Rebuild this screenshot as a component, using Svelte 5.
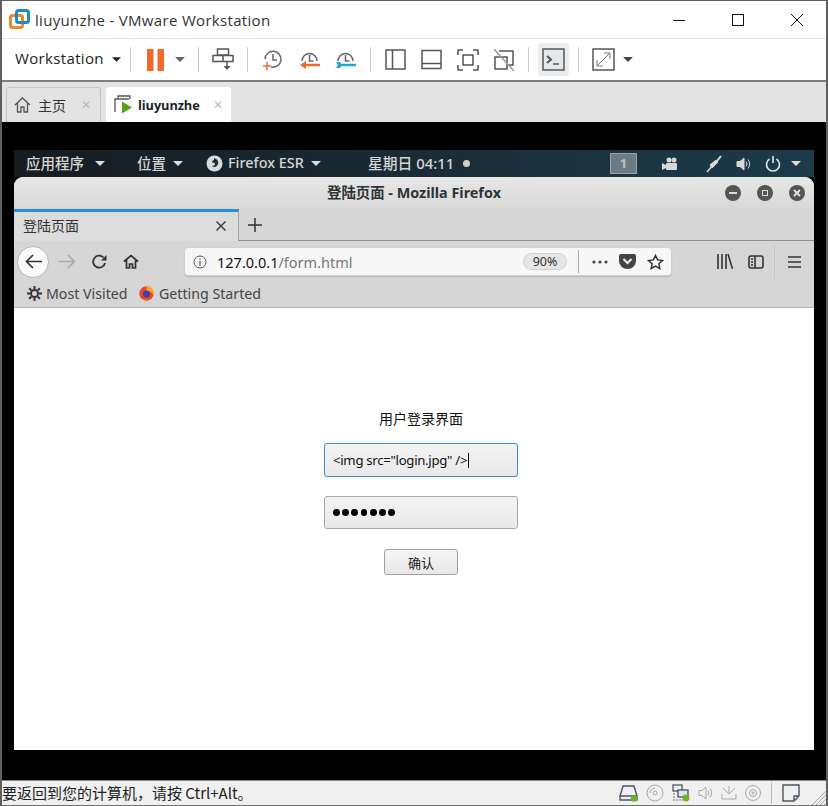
<script>
    const browserTitle = '登陆页面 - Mozilla Firefox';
</script>

{#snippet caret(w = 10, color = '#333')}
    <svg class="caret" width={w} height="5" viewBox="0 0 10 5"><path d="M0 0h10L5 5z" fill={color} /></svg>
{/snippet}

<div class="window">
    <header class="titlebar">
        <svg class="logo" width="22" height="22" viewBox="0 0 22 22">
            <rect x="1.5" y="6.500" width="12" height="12" rx="2" fill="none" stroke="#f08a24" stroke-width="3" />
            <rect x="7.500" y="1.500" width="12" height="12" rx="2" fill="none" stroke="#1b8fc4" stroke-width="3" />
        </svg>
        <span class="title">liuyunzhe - VMware Workstation</span>
        <div class="winbtns">
            <svg width="14" height="14" viewBox="0 0 14 14"><path d="M1 7.500h12" stroke="#111" /></svg>
            <svg width="14" height="14" viewBox="0 0 14 14"><rect x="1.500" y="1.500" width="11" height="11" fill="none" stroke="#111" /></svg>
            <svg width="14" height="14" viewBox="0 0 14 14"><path d="M1 1l12 12M13 1L1 13" stroke="#111" /></svg>
        </div>
    </header>

    <nav class="toolbar">
        <span class="menu">Workstation</span>
        <span class="c1">{@render caret(9, '#222')}</span>
        <i class="sep s1"></i>
        <svg class="pause" width="17" height="22" viewBox="0 0 17 22"><path d="M0 0h6.500v22H0zM10.500 0H17v22h-6.500z" fill="#f0692b" /></svg>
        <span class="c2">{@render caret(10, '#666')}</span>
        <i class="sep s2"></i>
        <svg class="snapsend" width="22" height="24" viewBox="0 0 22 24" fill="none" stroke="#555" stroke-width="1.500">
            <path d="M5.500 1h11v6h-11zM1 7.500h20v6H1zM11 7v6" />
            <path d="M15 14v4" /><path d="M11.500 18h7L15 22z" fill="#555" stroke="none" />
        </svg>
        <i class="sep s3"></i>
        <svg class="clock1" width="21" height="22" viewBox="0 0 21 22" fill="none" stroke="#666" stroke-width="1.500">
            <path d="M3 10a8 8 0 1 1 6 8" /><path d="M11 5v6h4" />
            <path d="M5 13v8M1 17h8" stroke="#e8703a" />
        </svg>
        <svg class="clock2" width="21" height="22" viewBox="0 0 21 22" fill="none" stroke="#666" stroke-width="1.500">
            <path d="M3 12a7.500 7.500 0 0 1 15 0" /><path d="M10.500 6v6h4" />
            <path d="M6 16h15" stroke="#ec6a2c" stroke-width="2.500" /><path d="M7 12v8l-6-4z" fill="#ec6a2c" stroke="none" />
        </svg>
        <svg class="clock3" width="21" height="22" viewBox="0 0 21 22" fill="none" stroke="#666" stroke-width="1.500">
            <path d="M3 12a7.500 7.500 0 0 1 15 0" /><path d="M10.500 6v6h4" />
            <path d="M6 16h15" stroke="#22a6cc" stroke-width="2.500" /><path d="M1 13h4l2 3-2 3H1l2-3z" fill="#22a6cc" stroke="none" />
        </svg>
        <i class="sep s4"></i>
        <svg class="v1" width="21" height="21" viewBox="0 0 21 21" fill="none" stroke="#555" stroke-width="1.500"><rect x="1" y="1" width="19" height="19" /><path d="M7.500 1v19" /></svg>
        <svg class="v2" width="21" height="21" viewBox="0 0 21 21" fill="none" stroke="#555" stroke-width="1.500"><rect x="1" y="1.500" width="19" height="18" /><path d="M1 14.500h19" /></svg>
        <svg class="v3" width="22" height="22" viewBox="0 0 22 22" fill="none" stroke="#555" stroke-width="1.500"><path d="M1 6V1h5M16 1h5v5M21 16v5h-5M6 21H1v-5" /><rect x="6" y="6" width="10" height="10" /></svg>
        <svg class="v4" width="23" height="22" viewBox="0 0 23 22" fill="none" stroke="#555" stroke-width="1.500"><path d="M7 2h14v14h-4M3 8h12v12H3z" /><path d="M2 0l20 22" stroke="#999" /></svg>
        <i class="sep s5"></i>
        <div class="termwrap">
            <svg width="23" height="23" viewBox="0 0 23 23" fill="#e2e8ec" stroke="#555" stroke-width="1.500"><rect x="1" y="1" width="21" height="21" /><path d="M5 8l4 3.500L5 15" fill="none" stroke-width="2" /><path d="M11 16h6" fill="none" /></svg>
        </div>
        <i class="sep s6"></i>
        <svg class="full" width="23" height="23" viewBox="0 0 23 23" fill="none" stroke="#555" stroke-width="1.500"><rect x="1" y="1" width="21" height="21" /><path d="M6 17L17 6M12 5h6v6M5 12v6h6" stroke-width="1" stroke="#777" /></svg>
        <span class="c3">{@render caret(10, '#444')}</span>
    </nav>

    <div class="vmtabs">
        <div class="vmtab home">
            <svg width="17" height="16" viewBox="0 0 17 16" fill="none" stroke="#555" stroke-width="1.300"><path d="M1 8l7.500-7L16 8M3.500 6v9h3.500v-5h3v5h3.500V6" /></svg>
            <span class="zh">主页</span>
            <span class="x">✕</span>
        </div>
        <div class="vmtab vm">
            <svg width="20" height="19" viewBox="0 0 20 19" fill="none" stroke="#555" stroke-width="1.300"><path d="M4 3V1h12v3M1 17V4h14" /><path d="M8 6.500v12l10-6z" fill="#5a9e1f" stroke="none" /></svg>
            <b>liuyunzhe</b>
            <span class="x">✕</span>
        </div>
    </div>

    <main class="vmarea">
        <div class="guest">
            <div class="gnome">
                <span class="g apps">应用程序</span>
                <span class="gc c-a">{@render caret(10, '#ddd')}</span>
                <span class="g places">位置</span>
                <span class="gc c-b">{@render caret(10, '#ddd')}</span>
                <svg class="fficon" width="17" height="17" viewBox="0 0 17 17"><circle cx="8.500" cy="8.500" r="8" fill="#d8dadb" /><path d="M8 3c3 1 5 3 4 6s-4 4-6 2c2 0 3-1 3-2S7 7 6 8c0-2 1-3 2-3z" fill="#1c2c35" /></svg>
                <span class="g ffname">Firefox ESR</span>
                <span class="gc c-c">{@render caret(10, '#ddd')}</span>
                <span class="g clock">星期日 04:11</span>
                <i class="dot"></i>
                <span class="ws">1</span>
                <svg class="cam" width="16" height="14" viewBox="0 0 16 14" fill="#d8d8d8"><circle cx="7" cy="3" r="2.500" /><circle cx="12" cy="3" r="2.500" /><rect x="4" y="6" width="11" height="7" rx="1" /><path d="M0 6l4 2v3l-4 2z" /></svg>
                <svg class="jack" width="16" height="18" viewBox="0 0 16 18" fill="none" stroke="#d8d8d8"><path d="M1 17l6-7" stroke-width="1.500" /><path d="M6 13l-2-3 6-5 2 2z" fill="#d8d8d8" /><path d="M11 6l4-5" stroke-width="2" /></svg>
                <svg class="vol" width="16" height="14" viewBox="0 0 16 14" fill="none" stroke="#d8d8d8"><path d="M1 4.500h3L8 1v12L4 9.500H1z" fill="#d8d8d8" /><path d="M10 4.500a4 4 0 0 1 0 5M12 2.500a7 7 0 0 1 0 9" /></svg>
                <svg class="power" width="16" height="17" viewBox="0 0 16 17" fill="none" stroke="#e2e2e2" stroke-width="1.600"><path d="M4.500 4a6.500 6.500 0 1 0 7 0M8 1v7" /></svg>
                <span class="gc c-d">{@render caret(10, '#ddd')}</span>
            </div>

            <div class="firefox">
                <div class="ff-title">
                    <strong>{browserTitle}</strong>
                    <div class="ff-btns">
                        <span class="fb"><i class="b-min"></i></span>
                        <span class="fb"><i class="b-max"></i></span>
                        <span class="fb"><svg width="8" height="8" viewBox="0 0 8 8"><path d="M1 1l6 6M7 1L1 7" stroke="#e4e4e4" stroke-width="1.800" /></svg></span>
                    </div>
                </div>

                <div class="ff-tabs">
                    <div class="ff-tab">
                        <span>登陆页面</span>
                        <svg width="10" height="10" viewBox="0 0 10 10"><path d="M.5.500l9 9M9.500.500l-9 9" stroke="#333" stroke-width="1.400" /></svg>
                    </div>
                    <svg class="plus" width="14" height="14" viewBox="0 0 14 14"><path d="M7 0v14M0 7h14" stroke="#333" stroke-width="1.500" /></svg>
                </div>

                <div class="ff-nav">
                    <span class="back"><svg width="17" height="15" viewBox="0 0 17 15" fill="none" stroke="#333" stroke-width="1.700"><path d="M8 1L1.500 7.500 8 14M2 7.500h15" /></svg></span>
                    <svg class="fwd" width="17" height="15" viewBox="0 0 17 15" fill="none" stroke="#aaa" stroke-width="1.700"><path d="M9 1l6.500 6.500L9 14M15 7.500H0" /></svg>
                    <svg class="reload" width="15" height="15" viewBox="0 0 15 15" fill="none" stroke="#333" stroke-width="1.800"><path d="M13 9a6 6 0 1 1-1.500-5.500" /><path d="M14.500 1v5.500H9z" fill="#333" stroke="none" /></svg>
                    <svg class="homeicon" width="16" height="15" viewBox="0 0 16 15" fill="none" stroke="#333" stroke-width="1.700"><path d="M1 7.500L8 1.500l7 6M3.500 6v8h3v-4h3v4h3V6" /></svg>
                    <div class="urlbar">
                        <svg width="14" height="14" viewBox="0 0 14 14" fill="none" stroke="#555"><circle cx="7" cy="7" r="6" /><path d="M7 6v4.500M7 3.500v1.200" stroke-width="1.300" /></svg>
                        <span class="url">127.0.0.1<em>/form.html</em></span>
                        <span class="zoom">90%</span>
                        <i class="urlsep"></i>
                        <svg class="dots" width="16" height="4" viewBox="0 0 16 4" fill="#444"><circle cx="2" cy="2" r="1.600" /><circle cx="8" cy="2" r="1.600" /><circle cx="14" cy="2" r="1.600" /></svg>
                        <svg class="pocket" width="17" height="15" viewBox="0 0 17 15"><path d="M2 0h13a2 2 0 0 1 2 2v5a8.500 8 0 0 1-17 0V2a2 2 0 0 1 2-2z" fill="#444" /><path d="M4.500 5l4 4 4-4" fill="none" stroke="#eee" stroke-width="2" /></svg>
                        <svg class="star" width="17" height="16" viewBox="0 0 17 16" fill="none" stroke="#333" stroke-width="1.500"><path d="M8.500 1.500l2.100 4.400 4.900.6-3.600 3.300.9 4.800-4.300-2.400-4.300 2.400.9-4.800-3.600-3.300 4.900-.6z" /></svg>
                    </div>
                    <svg class="lib" width="16" height="15" viewBox="0 0 16 15" stroke="#333" stroke-width="1.600"><path d="M1 0v15M5 0v15M9 0v15M11 0l4.500 15" /></svg>
                    <svg class="side" width="16" height="14" viewBox="0 0 16 14" fill="none" stroke="#333" stroke-width="1.600"><rect x="1" y="1" width="14" height="12" rx="2" /><path d="M7 1v12M3 4h2M3 7h2M3 10h2" /></svg>
                    <i class="navsep"></i>
                    <svg class="burger" width="13" height="12" viewBox="0 0 13 12" stroke="#333" stroke-width="1.700"><path d="M0 1h13M0 6h13M0 11h13" /></svg>
                </div>

                <div class="ff-marks">
                    <svg width="15" height="15" viewBox="0 0 15 15" fill="none" stroke="#333"><circle cx="7.500" cy="7.500" r="3.500" stroke-width="2" /><path d="M7.500 0v3M7.500 12v3M0 7.500h3M12 7.500h3M2.200 2.200l2 2M10.800 10.800l2 2M2.200 12.800l2-2M10.800 4.200l2-2" stroke-width="2" /></svg>
                    <span class="mark-a">Most Visited</span>
                    <svg class="ffcolor" width="15" height="15" viewBox="0 0 15 15"><circle cx="7.500" cy="7.500" r="7.200" fill="#e8452c" /><path d="M7.500 0a7.500 7.500 0 0 1 7 10c-1-3-3-5-7-5z" fill="#f7a823" /><circle cx="7.500" cy="8" r="3.500" fill="#3f3fa8" /><path d="M1 11a7.500 7.500 0 0 0 11 2c-4 1-8 0-11-2z" fill="#f2711c" /></svg>
                    <span>Getting Started</span>
                </div>

                <div class="page">
                    <div class="login">
                        <p>用户登录界面</p>
                        <div class="field active">&lt;img src="login.jpg" /&gt;<i class="cursor"></i></div>
                        <div class="field pwd">
                            {#each Array(7) as _}<i></i>{/each}
                        </div>
                        <button type="button">确认</button>
                    </div>
                </div>
            </div>
        </div>
    </main>

    <footer class="status">
        <span class="msg">要返回到您的计算机，请按 Ctrl+Alt。</span>
        <div class="tray">
            <svg width="19" height="17" viewBox="0 0 19 17" fill="none" stroke="#4a5560" stroke-width="1.400"><path d="M4 1h11l3 10v4H1v-4zM1 11h17" /><circle cx="15" cy="13.500" r="3.200" fill="#6cb52d" stroke="none" /></svg>
            <svg width="18" height="18" viewBox="0 0 18 18" fill="none" stroke="#aaa"><circle cx="9" cy="9" r="8" /><circle cx="9" cy="9" r="2" /><path d="M4 9a5 5 0 0 1 5-5" /></svg>
            <svg width="18" height="18" viewBox="0 0 18 18" fill="none" stroke="#4a5560" stroke-width="1.300"><rect x="1" y="1" width="9" height="6" /><rect x="6" y="6" width="10" height="7" fill="#dfe6ee" /><path d="M1 10h3M1 13h3M1 16h10" stroke="#999" stroke-dasharray="2 1" /><circle cx="14" cy="14" r="3.400" fill="#6cb52d" stroke="none" /></svg>
            <svg width="15" height="14" viewBox="0 0 15 14" fill="none" stroke="#aaa"><path d="M1 4.500h3L8 1v12L4 9.500H1zM10 4.500a4 4 0 0 1 0 5M12 2.500a7 7 0 0 1 0 9" /></svg>
            <svg width="16" height="16" viewBox="0 0 16 16" fill="none" stroke="#aaa"><path d="M1 9v5h14V9M8 1v8M5 6l3 3 3-3M2 3l3 3M14 3l-3 3" /></svg>
            <svg width="16" height="16" viewBox="0 0 16 16" fill="none" stroke="#aaa"><circle cx="8" cy="8" r="7.500" /><circle cx="8" cy="8" r="3.500" /><circle cx="8" cy="8" r="1" /></svg>
            <i class="traysep"></i>
            <svg width="18" height="18" viewBox="0 0 18 18" fill="none" stroke="#4a5560" stroke-width="1.400"><path d="M1 1h16v11l-5 5H1zM17 12h-5v5" /></svg>
            <svg class="grip" width="14" height="14" viewBox="0 0 14 14" stroke="#aaa"><path d="M0 14L14 0M4 14L14 4M8 14l6-6M12 14l2-2" /></svg>
        </div>
    </footer>
</div>

<style>
    :global(body) {
        margin: 0;
        background: #fff;
    }

    .window {
        width: 828px;
        height: 806px;
        box-sizing: border-box;
        border: 2px solid #5f5f5f;
        border-top-width: 1px;
        border-bottom-width: 0;
        display: flex;
        flex-direction: column;
        font-family: "Open Sans", "Noto Sans CJK SC", sans-serif;
        color: #222;
        overflow: hidden;
    }

    i {
        display: block;
    }

    /* vmware chrome */
    .titlebar {
        height: 37px;
        flex: none;
        display: flex;
        align-items: center;
        background: #fff;
        padding-left: 7px;
    }

    .title {
        margin-left: 4px;
        font-size: 15px;
        letter-spacing: 0.32px;
        color: #333;
    }

    .winbtns {
        margin-left: auto;
        display: flex;
        gap: 45px;
        margin-right: 22px;
    }

    .toolbar {
        height: 44px;
        flex: none;
        box-sizing: border-box;
        display: flex;
        align-items: center;
        background: #fff;
        border-top: 1px solid #e8e8e8;
        border-bottom: 2px solid #7d7d7d;
        padding-left: 13px;
    }

    .toolbar svg {
        flex: none;
    }

    .menu {
        font-size: 15px;
        width: 90px;
        letter-spacing: 0.35px;
        padding-bottom: 3px;
    }

    .caret {
        display: block;
    }

    .c1 { margin-left: 7px; }
    .sep {
        width: 1px;
        height: 25px;
        background: #ccc;
        flex: none;
    }
    .s1 { margin-left: 9px; }
    .pause { margin-left: 16px; }
    .c2 { margin-left: 11px; }
    .s2 { margin-left: 13px; }
    .snapsend { margin-left: 13px; }
    .s3 { margin-left: 13px; }
    .clock1 { margin-left: 14px; }
    .clock2 { margin-left: 16px; }
    .clock3 { margin-left: 15px; }
    .s4 { margin-left: 14px; }
    .v1 { margin-left: 14px; }
    .v2 { margin-left: 15px; }
    .v3 { margin-left: 15px; }
    .v4 { margin-left: 13px; }
    .s5 { margin-left: 13px; }

    .termwrap {
        margin-left: 9px;
        width: 31px;
        height: 33px;
        background: #e9edef;
        border-radius: 3px;
        display: flex;
        align-items: center;
        justify-content: center;
    }

    .s6 { margin-left: 9px; }
    .full { margin-left: 13px; }
    .c3 { margin-left: 8px; }

    .vmtabs {
        height: 40px;
        flex: none;
        box-sizing: border-box;
        background: #e3e3e3;
        display: flex;
        align-items: flex-end;
        gap: 5px;
        padding-left: 4px;
    }

    .vmtab {
        height: 35px;
        box-sizing: border-box;
        display: flex;
        align-items: center;
        border-radius: 3px 3px 0 0;
    }

    .vmtab.home {
        width: 95px;
        border: 1px solid #c4c4c4;
        border-bottom: 0;
        padding-left: 7px;
        font-size: 14px;
        color: #333;
    }

    .zh {
        margin-left: 7px;
    }

    .vmtab.vm {
        width: 125px;
        background: #fff;
        padding-left: 8px;
    }

    .vmtab b {
        font-size: 12.800px;
        margin-left: 4px;
        width: 67px;
        color: #222;
        letter-spacing: -0.1px;
    }

    .x {
        color: #bbb;
        font-size: 12px;
        font-family: "DejaVu Sans", sans-serif;
    }

    .home .x {
        margin-left: 15px;
    }

    .vm .x {
        margin-left: 8px;
    }

    /* guest */
    .vmarea {
        height: 658px;
        flex: none;
        box-sizing: border-box;
        background: #000;
        padding: 28px 12px 30px;
    }

    .guest {
        height: 600px;
        display: flex;
        flex-direction: column;
    }

    .gnome {
        height: 27px;
        flex: none;
        display: flex;
        align-items: center;
        background: linear-gradient(90deg, #161c20, #1a2d38 55%, #1c3b4b);
        color: #d6d6d6;
        padding-left: 12px;
        font-family: "Noto Sans", "Noto Sans CJK SC", sans-serif;
    }

    .gnome svg {
        flex: none;
    }

    .g {
        font-size: 14.500px;
        font-weight: 500;
        white-space: nowrap;
        padding-bottom: 2px;
    }

    .apps { width: 58px; }
    .c-a { margin-left: 11px; }
    .places { margin-left: 32px; width: 29px; }
    .c-b { margin-left: 7px; }
    .fficon { margin-left: 23px; }
    .ffname { margin-left: 5px; width: 78px; font-size: 14.400px; }
    .c-c { margin-left: 5px; }
    .clock { margin-left: 47px; width: 89px; font-size: 14.800px; }

    .dot {
        width: 7px;
        height: 7px;
        border-radius: 50%;
        background: #d0d0d0;
        margin-left: 6px;
    }

    .ws {
        margin-left: 140px;
        width: 27px;
        height: 21px;
        box-sizing: border-box;
        border: 1px solid #99a3aa;
        background: #6d7a83;
        color: #b9c0c5;
        font-size: 13px;
        font-weight: 700;
        text-align: center;
        line-height: 19px;
    }

    .cam { margin-left: 25px; }
    .jack { margin-left: 28px; }
    .vol { margin-left: 14px; }
    .power { margin-left: 13px; }
    .c-d { margin-left: 10px; }

    .firefox {
        flex: 1;
        min-height: 0;
        display: flex;
        flex-direction: column;
        border-radius: 9px 9px 0 0;
        overflow: hidden;
        font-family: "Noto Sans", "Noto Sans CJK SC", sans-serif;
        background: #d6d6d6;
        color: #333;
    }

    .ff-title {
        height: 32px;
        flex: none;
        box-sizing: border-box;
        padding-bottom: 3px;
        position: relative;
        display: flex;
        align-items: center;
        justify-content: center;
        background: linear-gradient(#e7e7e7, #d8d8d8);
    }

    .ff-title strong {
        font-size: 14.400px;
        font-weight: 700;
        color: #2e3436;
    }

    .ff-btns {
        position: absolute;
        right: 9px;
        top: 8px;
        display: flex;
        gap: 16px;
    }

    .fb {
        width: 16px;
        height: 16px;
        border-radius: 50%;
        background: #555;
        display: flex;
        align-items: center;
        justify-content: center;
    }

    .b-min {
        width: 8px;
        height: 2px;
        background: #ddd;
    }

    .b-max {
        width: 6px;
        height: 6px;
        border: 1.500px solid #ddd;
        box-sizing: border-box;
    }

    .ff-tabs {
        height: 32px;
        flex: none;
        box-sizing: border-box;
        display: flex;
        align-items: center;
        border-bottom: 1px solid #8d8d8d;
    }

    .ff-tab {
        width: 225px;
        height: 32px;
        box-sizing: border-box;
        border-top: 3px solid #2a90d6;
        border-right: 1px solid #a5a5a5;
        display: flex;
        align-items: center;
        padding: 0 12px 2px 9px;
        justify-content: space-between;
        font-size: 14px;
        background: #dcdcdc;
    }

    .ff-tab svg {
        margin-top: 2px;
    }

    .plus {
        margin-left: 9px;
    }

    .ff-nav {
        height: 41px;
        flex: none;
        display: flex;
        align-items: center;
        padding-left: 3px;
    }

    .ff-nav > svg {
        flex: none;
    }

    .back {
        width: 32px;
        height: 32px;
        box-sizing: border-box;
        border: 1px solid #b5b5b5;
        border-radius: 50%;
        background: #fbfbfb;
        display: flex;
        align-items: center;
        justify-content: center;
        flex: none;
    }

    .fwd { margin-left: 10px; }
    .reload { margin-left: 16px; }
    .homeicon { margin-left: 16px; }

    .urlbar {
        margin-left: 45px;
        width: 488px;
        height: 29px;
        box-sizing: border-box;
        background: #f7f7f7;
        border: 1px solid #d0d0d0;
        border-radius: 4px;
        box-shadow: 0 1px 1px rgba(0, 0, 0, 0.12);
        display: flex;
        align-items: center;
        padding-left: 8px;
    }

    .urlbar svg {
        flex: none;
    }

    .url {
        margin-left: 10px;
        width: 306px;
        font-size: 14.500px;
        color: #111;
    }

    .url em {
        font-style: normal;
        color: #777;
    }

    .zoom {
        width: 44px;
        height: 17px;
        box-sizing: border-box;
        background: #e6e6e6;
        border: 1px solid #d0d0d0;
        border-radius: 9px;
        font-size: 12.500px;
        line-height: 15px;
        text-align: center;
    }

    .urlsep {
        width: 1px;
        height: 23px;
        background: #aaa;
        margin-left: 11px;
    }

    .dots { margin-left: 13px; }
    .pocket { margin-left: 11px; }
    .star { margin-left: 11px; }
    .lib { margin-left: 45px; }
    .side { margin-left: 15px; }

    .navsep {
        width: 1px;
        height: 34px;
        background: #c4c4c4;
        margin-left: 10px;
    }

    .burger { margin-left: 13px; }

    .ff-marks {
        height: 26px;
        flex: none;
        box-sizing: border-box;
        border-bottom: 1px solid #b5b5b5;
        display: flex;
        align-items: center;
        padding: 0 0 3px 13px;
        font-size: 14.200px;
        color: #444;
    }

    .mark-a {
        margin-left: 4px;
        width: 81px;
        white-space: nowrap;
    }

    .ffcolor {
        margin-left: 12px;
        margin-right: 5px;
    }

    .page {
        flex: 1;
        background: #fff;
        font-family: "Noto Sans", "Noto Sans CJK SC", sans-serif;
    }

    .login {
        margin-left: 310px;
        width: 194px;
        padding-top: 101px;
        display: flex;
        flex-direction: column;
        align-items: center;
        color: #111;
    }

    .login p {
        margin: 0;
        height: 19px;
        line-height: 19px;
        font-size: 14px;
    }

    .field {
        width: 194px;
        box-sizing: border-box;
        border: 1px solid #a8a8a8;
        border-radius: 3px;
        background: linear-gradient(#f3f3f3, #e9e9e9);
        display: flex;
        align-items: center;
        padding-left: 8px;
        white-space: nowrap;
    }

    .active {
        margin-top: 15px;
        height: 34px;
        border-color: #3f8ec0;
        box-shadow: 0 0 1px #8cc4e6;
        font-size: 13.200px;
        letter-spacing: -0.3px;
    }

    .cursor {
        width: 1px;
        height: 15px;
        background: #000;
        margin-left: 1px;
    }

    .pwd {
        margin-top: 19px;
        height: 33px;
        gap: 2.400px;
    }

    .pwd i {
        width: 6.800px;
        height: 6.800px;
        border-radius: 50%;
        background: #000;
    }

    button {
        margin-top: 20px;
        width: 74px;
        height: 26px;
        box-sizing: border-box;
        border: 1px solid #a0a0a0;
        border-radius: 3px;
        background: linear-gradient(#f5f5f5, #e8e8e8);
        font-family: inherit;
        font-size: 13px;
        color: #222;
        padding: 0;
    }

    /* status bar */
    .status {
        flex: 1;
        min-height: 0;
        box-sizing: border-box;
        border-top: 1px solid #8a8a8a;
        border-bottom: 1px solid #707070;
        background: #f0f0f0;
        display: flex;
        align-items: center;
        font-family: "Noto Sans CJK SC", sans-serif;
    }

    .msg {
        font-size: 15px;
        color: #222;
        white-space: nowrap;
        padding-bottom: 2px;
    }

    .tray {
        margin-left: auto;
        display: flex;
        align-items: center;
        gap: 8px;
    }

    .traysep {
        width: 1px;
        height: 22px;
        background: #bbb;
        margin: 0 2px;
    }

    .grip {
        margin: 9px 0 0 4px;
    }
</style>
